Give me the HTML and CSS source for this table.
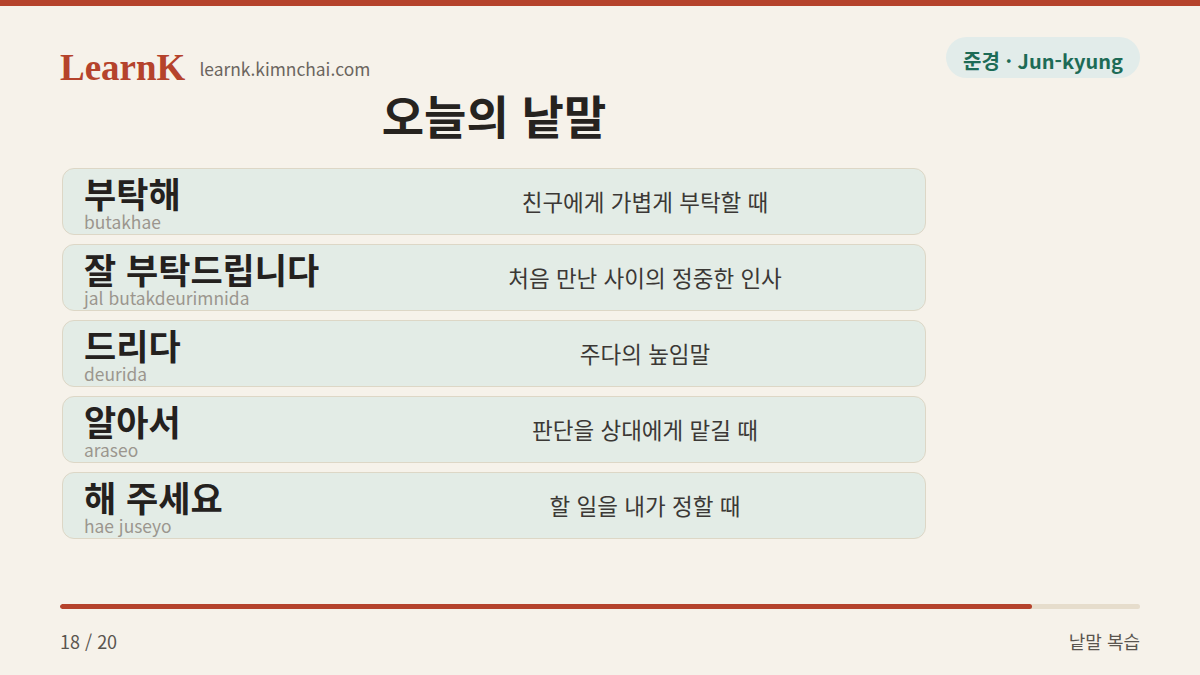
FILE: index.html
```html
<!DOCTYPE html>
<html lang="ko">
<head>
<meta charset="utf-8">
<title>LearnK</title>
<link rel="stylesheet" href="styles.css">
</head>
<body>
<div class="slide">
  <div class="top-bar"></div>
  <header class="header">
    <div class="brand">
      <span class="logo">LearnK</span>
      <span class="site">learnk.kimnchai.com</span>
    </div>
    <div class="pill">준경 · Jun-kyung</div>
  </header>
  <main class="content">
    <h1 class="title">오늘의 낱말</h1>
    <ul class="cards">
      <li class="card">
        <div class="word"><span class="ko">부탁해</span><span class="rom">butakhae</span></div>
        <div class="meaning">친구에게 가볍게 부탁할 때</div>
      </li>
      <li class="card">
        <div class="word"><span class="ko">잘 부탁드립니다</span><span class="rom">jal butakdeurimnida</span></div>
        <div class="meaning">처음 만난 사이의 정중한 인사</div>
      </li>
      <li class="card">
        <div class="word"><span class="ko">드리다</span><span class="rom">deurida</span></div>
        <div class="meaning">주다의 높임말</div>
      </li>
      <li class="card">
        <div class="word"><span class="ko">알아서</span><span class="rom">araseo</span></div>
        <div class="meaning">판단을 상대에게 맡길 때</div>
      </li>
      <li class="card">
        <div class="word"><span class="ko">해 주세요</span><span class="rom">hae juseyo</span></div>
        <div class="meaning">할 일을 내가 정할 때</div>
      </li>
    </ul>
  </main>
  <footer class="footer">
    <div class="progress"><div class="progress-fill" style="width: 90%"></div></div>
    <div class="footer-row">
      <span class="page-num">18 / 20</span>
      <span class="section">낱말 복습</span>
    </div>
  </footer>
</div>
</body>
</html>
```
FILE: styles.css
```css
* { box-sizing: border-box; }
html, body {
  margin: 0;
  padding: 0;
}
body {
  background: #f6f2ea;
  font-family: "Noto Sans CJK KR", "Noto Sans", sans-serif;
  color: #2a2724;
}
.slide {
  width: 1200px;
  height: 675px;
  display: flex;
  flex-direction: column;
  overflow: hidden;
}
.top-bar {
  height: 6px;
  background: #b5432c;
  flex: none;
}
.header {
  display: flex;
  justify-content: space-between;
  align-items: flex-start;
  padding: 31px 60px 0 60px;
  height: 80px;
}
.brand {
  display: flex;
  align-items: center;
  gap: 14px;
  padding-top: 12px;
}
.logo {
  font-family: "Liberation Serif", "DejaVu Serif", serif;
  font-weight: 700;
  font-size: 37px;
  color: #b5432c;
  line-height: 1;
}
.site {
  font-size: 17.4px;
  color: #6b655e;
  line-height: 1;
  margin-top: 2px;
}
.pill {
  background: #e2ecea;
  color: #1d6b56;
  font-weight: 700;
  font-size: 20px;
  line-height: 1;
  height: 41px;
  padding: 6px 17px 0 17px;
  border-radius: 21px;
  display: flex;
  align-items: center;
}
.content {
  width: 864px;
  margin-left: 62px;
}
.title {
  margin: 0;
  text-align: center;
  font-size: 46px;
  font-weight: 700;
  line-height: 56px;
  height: 82px;
  color: #26231f;
}
.cards {
  list-style: none;
  margin: 0;
  padding: 0;
  display: flex;
  flex-direction: column;
  gap: 9px;
}
.card {
  height: 67px;
  background: #e3ece6;
  border: 1px solid #ddd7c6;
  border-radius: 12px;
  display: flex;
  align-items: stretch;
  padding: 0 22px 0 21px;
}
.word {
  width: 303px;
  display: flex;
  flex-direction: column;
  padding-top: 6px;
}
.ko {
  font-size: 35px;
  font-weight: 700;
  line-height: 36px;
  color: #24211e;
  white-space: nowrap;
}
.rom {
  font-size: 17.4px;
  line-height: 18px;
  color: #9b968e;
  margin-top: 2px;
  white-space: nowrap;
}
.meaning {
  flex: 1;
  text-align: center;
  align-self: center;
  font-size: 22.5px;
  color: #3b3835;
  line-height: 1;
}
.footer {
  margin-top: auto;
  padding: 0 60px 22px 60px;
}
.progress {
  height: 5px;
  background: #e6ddcc;
  border-radius: 3px;
  overflow: hidden;
}
.progress-fill {
  height: 100%;
  background: #b5432c;
  border-radius: 3px;
}
.footer-row {
  display: flex;
  justify-content: space-between;
  align-items: center;
  margin-top: 20px;
  font-size: 18px;
  color: #5a554f;
  line-height: 24px;
}
```
